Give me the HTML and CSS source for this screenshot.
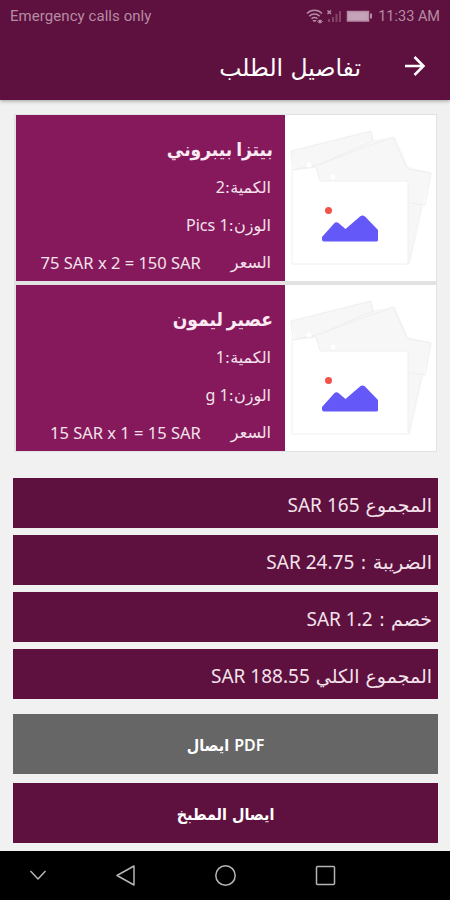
FILE: index.html
```html
<!DOCTYPE html>
<html lang="ar" dir="rtl">
<head>
<meta charset="utf-8">
<title>تفاصيل الطلب</title>
<link rel="stylesheet" href="styles.css">
</head>
<body>
<header class="top">
  <div class="status" dir="ltr">
    <span class="carrier">Emergency calls only</span>
    <svg class="indicators" width="68" height="16" viewBox="0 0 68 16" fill="none" stroke="#b78ba5" stroke-width="1.5">
      <path d="M1 5.5C5 1.2 12 1.2 16 5.5M3.2 8.2c3-3 7.500-3 10.500 0M5.500 10.700c2-1.700 4-1.700 6 0"/>
      <path d="M7 12.500l1.500 1.500 1.500-1.500zM11.500 13.500l2-1.500v3zM16.500 13.500l-2-1.500v3z" stroke-width="1"/>
      <path d="M21.500 2.500l3.500 3.500m0-3.500l-3.500 3.500" stroke-width="1.500"/>
      <path d="M23 11v3M27 9v5M30.500 6v8M34 3v11" stroke="#824568" stroke-width="2"/>
      <rect x="41.500" y="3.500" width="21" height="9.500" fill="#c5a2b7"/>
      <path d="M65 5.500v5" stroke-width="2"/>
    </svg>
    <span class="clock">11:33 AM</span>
  </div>
  <div class="bar">
    <svg width="22" height="22" viewBox="0 0 22 22" fill="none" stroke="#fff" stroke-width="2.500"><path d="M1 11h18M10.500 2l9 9-9 9"/></svg>
    <h1>تفاصيل الطلب</h1>
  </div>
</header>

<main>
  <section class="items">
    <article class="item">
      <div class="photo">
        <svg width="151" height="165" viewBox="0 0 151 165">
          <path d="M6 36L86 16l3 9 21-3 13 30 23 5-21 92H30z" fill="#f7f7f7"/>
          <path d="M6 36L86 16l2 10-53 23-27 6zM35 49l73-27 14 31M123 54l23 4-6 32-23-3M136 92l-13 57" fill="none" stroke="#efefef"/>
          <path d="M123 88l13 3-13 58z" fill="#f7f7f7"/>
          <circle cx="24" cy="50" r="2.500" fill="#fff"/><circle cx="48" cy="62" r="2.500" fill="#fff"/>
          <path d="M7 55l24-3 4 14h88v83H7z" fill="#fff" stroke="#f0f0f0"/>
          <circle cx="43.500" cy="95.500" r="3.500" fill="#f4514b"/>
          <path d="M37 122L49.500 108q2-1.500 4 0l7 6L75 101.500q2.500-2 5 0L93 115v10q0 1.500-1.500 1.500H39q-2 0-2-2z" fill="#6459f8"/>
        </svg>
      </div>
      <div class="info">
        <h2>بيتزا بيبروني</h2>
        <p>الكمية:<span class="lat">2</span></p>
        <p>الوزن:<span class="lat">1 Pics</span></p>
        <p class="price"><span>السعر</span><span class="lat" dir="ltr">75 SAR x 2 = 150 SAR</span></p>
      </div>
    </article>
    <article class="item">
      <div class="photo">
        <svg width="151" height="165" viewBox="0 0 151 165">
          <path d="M6 36L86 16l3 9 21-3 13 30 23 5-21 92H30z" fill="#f7f7f7"/>
          <path d="M6 36L86 16l2 10-53 23-27 6zM35 49l73-27 14 31M123 54l23 4-6 32-23-3M136 92l-13 57" fill="none" stroke="#efefef"/>
          <path d="M123 88l13 3-13 58z" fill="#f7f7f7"/>
          <circle cx="24" cy="50" r="2.500" fill="#fff"/><circle cx="48" cy="62" r="2.500" fill="#fff"/>
          <path d="M7 55l24-3 4 14h88v83H7z" fill="#fff" stroke="#f0f0f0"/>
          <circle cx="43.500" cy="95.500" r="3.500" fill="#f4514b"/>
          <path d="M37 122L49.500 108q2-1.500 4 0l7 6L75 101.500q2.500-2 5 0L93 115v10q0 1.500-1.500 1.500H39q-2 0-2-2z" fill="#6459f8"/>
        </svg>
      </div>
      <div class="info">
        <h2>عصير ليمون</h2>
        <p>الكمية:<span class="lat">1</span></p>
        <p>الوزن:<span class="lat">1 g</span></p>
        <p class="price"><span>السعر</span><span class="lat" dir="ltr">15 SAR x 1 = 15 SAR</span></p>
      </div>
    </article>
  </section>

  <section class="totals">
    <div class="total">المجموع <span class="lat">165 SAR</span></div>
    <div class="total">الضريبة : <span class="lat">24.75 SAR</span></div>
    <div class="total">خصم : <span class="lat">1.2 SAR</span></div>
    <div class="total">المجموع الكلي <span class="lat">188.55 SAR</span></div>
  </section>

  <section class="actions">
    <button class="pdf"><span class="lat">PDF</span> ايصال</button>
    <button class="kitchen">ايصال المطبخ</button>
  </section>
</main>

<nav class="nav" dir="ltr">
  <svg width="450" height="49" viewBox="0 0 450 49" fill="none" stroke="#b5b5b5" stroke-width="1.500">
    <path d="M30.500 20l7.500 8 7.500-8M134 15v19l-17-9.500z" stroke-linejoin="round"/>
    <circle cx="225.500" cy="24.500" r="9.700"/>
    <rect x="316.500" y="15.500" width="18" height="18" rx="1"/>
  </svg>
</nav>
</body>
</html>
```
FILE: styles.css
```css
* { box-sizing: border-box; }
body {
  margin: 0;
  width: 450px;
  height: 900px;
  display: flex;
  flex-direction: column;
  background: #f1f1f1;
  font-family: "DejaVu Sans", sans-serif;
  color: #f3e2ec;
  overflow: hidden;
}
h1, h2, p { margin: 0; }
.lat { font-family: "Noto Sans", sans-serif; }
.top {
  height: 100px;
  background: #5e113e;
  box-shadow: 0 1px 4px rgba(0, 0, 0, .35);
  flex: none;
}
.status {
  height: 32px;
  padding: 0 10px;
  display: flex;
  align-items: center;
  font: 15px Roboto, sans-serif;
  color: #b78ba5;
}
.carrier { margin-right: auto; letter-spacing: .06px; }
.clock { font-size: 14.500px; margin-left: 4px; }
.bar {
  height: 68px;
  padding: 0 24px;
  display: flex;
  align-items: center;
  gap: 43px;
}
.bar svg { margin-bottom: 1px; }
h1 { font-size: 23.500px; font-weight: 400; color: #fff; padding-top: 4px; }
main { flex: 1; padding: 14px 12px 0 13px; }
.items {
  margin: 0 1px;
  border: 1px solid #e2e2e2;
  background: #e2e2e2;
  display: flex;
  flex-direction: column;
  gap: 4px;
}
.item { height: 166px; display: flex; background: #fff; }
.photo { width: 151px; flex: none; }
.photo svg { display: block; }
.info {
  flex: 1;
  background: #85195b;
  padding: 16px 14px 0 0;
  border-left: 1px solid #e2e2e2;
}
h2 {
  font-family: "DejaVu Sans Condensed", "DejaVu Sans", sans-serif;
  font-stretch: condensed;
  font-size: 19px;
  letter-spacing: 0;
  word-spacing: -2px;
  line-height: 37px;
  margin-right: -2px;
  color: #fbeaf4;
}
.info p { font-size: 16px; line-height: 38px; height: 38px; }
.info .price { display: flex; gap: 30px; }
.price .lat { font-size: 16.500px; }
.totals {
  margin-top: 26px;
  display: flex;
  flex-direction: column;
  gap: 7px;
}
.total {
  height: 50px;
  padding: 2px 6px 0 0;
  line-height: 50px;
  font-size: 19px;
  background: #5e113e;
  white-space: nowrap;
}
.actions {
  margin-top: 15px;
  display: flex;
  flex-direction: column;
  gap: 9px;
}
button {
  height: 60px;
  border: 0;
  padding: 2px 0 0;
  font: 700 16px "DejaVu Sans Condensed", "DejaVu Sans", sans-serif;
  font-stretch: condensed;
  color: #fff;
}
button .lat { font-weight: 600; }
.pdf { background: #666; }
.kitchen { background: #5e113e; }
.nav { height: 49px; background: #000; flex: none; }
.nav svg { display: block; }
```
